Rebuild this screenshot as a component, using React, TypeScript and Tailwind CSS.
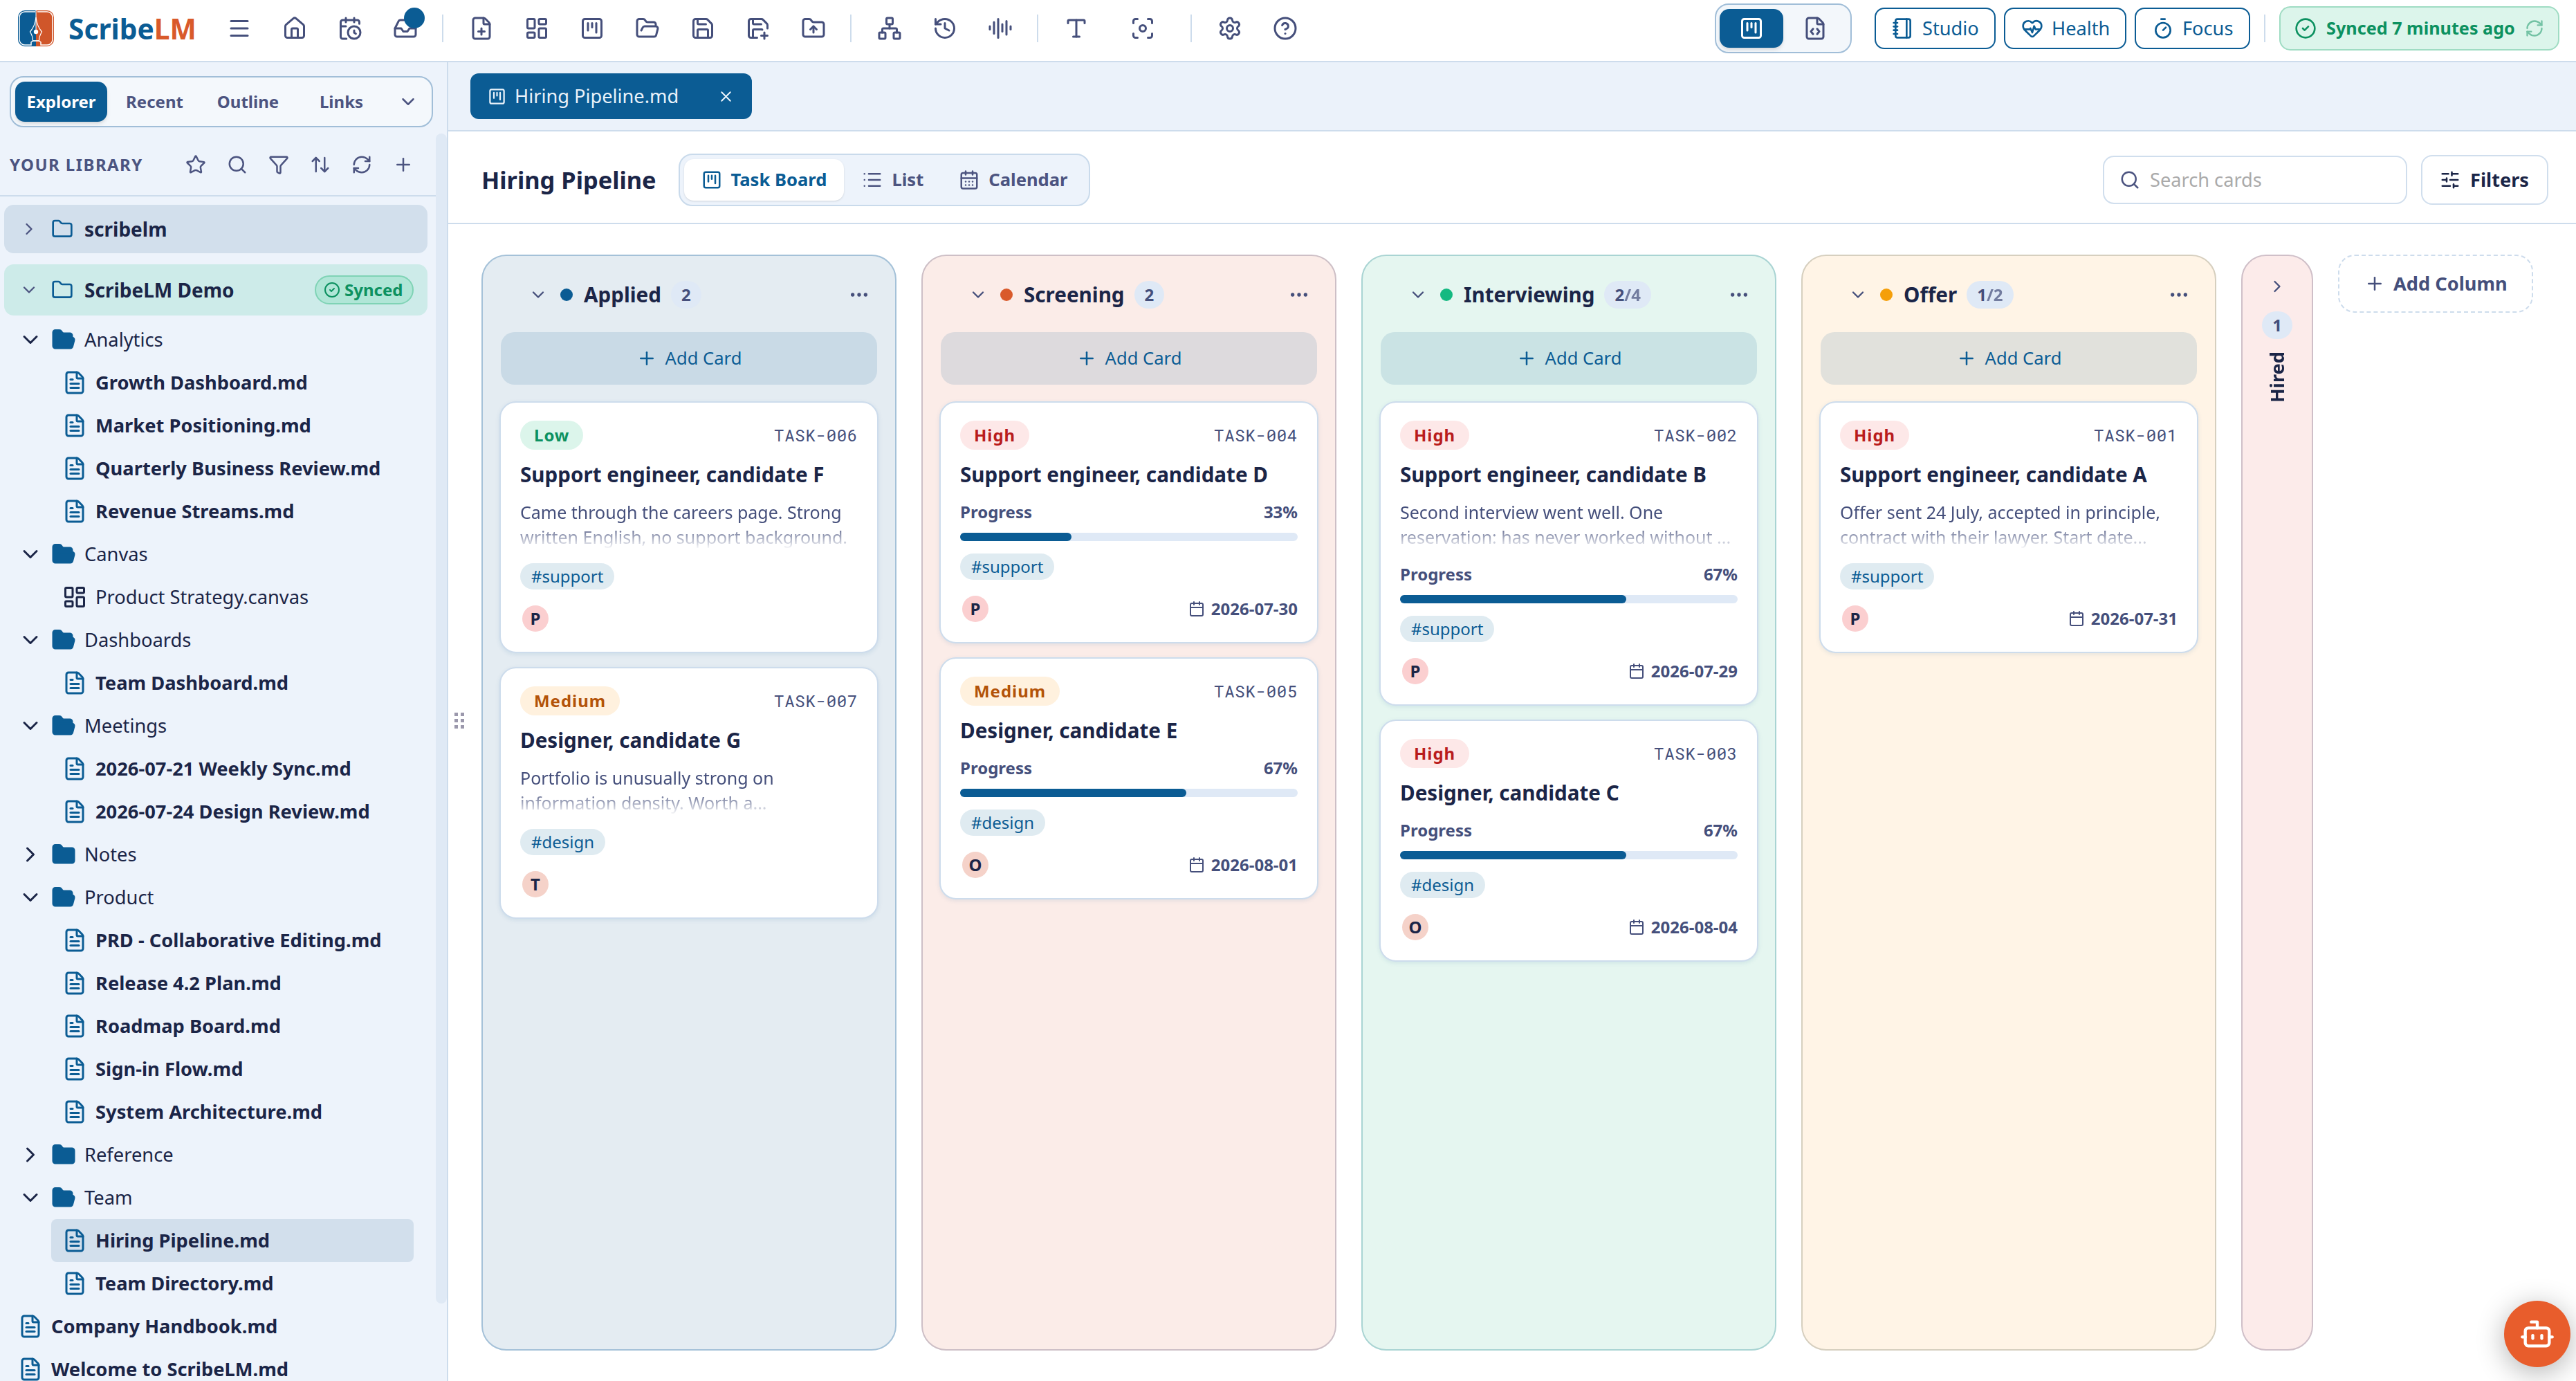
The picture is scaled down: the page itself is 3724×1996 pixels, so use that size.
import { ReactNode } from "react";
import clsx from "clsx";
import {
  ArrowUpDown,
  AudioLines,
  Bot,
  Calendar,
  CalendarClock,
  CalendarDays,
  ChevronDown,
  ChevronRight,
  CircleCheck,
  CircleQuestionMark,
  Ellipsis,
  FileCode,
  FilePlus,
  FileText,
  Focus,
  Folder,
  FolderOpen,
  FolderUp,
  Funnel,
  HeartPulse,
  History,
  House,
  Inbox,
  LayoutDashboard,
  List,
  LucideIcon,
  Menu,
  Network,
  Notebook,
  Plus,
  RefreshCw,
  Save,
  Search,
  Settings,
  SlidersHorizontal,
  SquareKanban,
  Star,
  Timer,
  Type,
  X,
} from "lucide-react";

type Priority = "Low" | "Medium" | "High";

interface Task {
  id: string;
  priority: Priority;
  title: string;
  lines?: string[];
  progress?: number;
  tag: string;
  owner: string;
  due?: string;
}

interface Column {
  name: string;
  count: string;
  limit?: string;
  dot: string;
  tone: string;
  tasks: Task[];
}

const columns: Column[] = [
  {
    name: "Applied",
    count: "2",
    dot: "bg-[#0b5c94]",
    tone: "bg-[#e4ecf2] border-[#a4c1d8]",
    tasks: [
      {
        id: "TASK-006",
        priority: "Low",
        title: "Support engineer, candidate F",
        lines: ["Came through the careers page. Strong", "written English, no support background."],
        tag: "#support",
        owner: "P",
      },
      {
        id: "TASK-007",
        priority: "Medium",
        title: "Designer, candidate G",
        lines: ["Portfolio is unusually strong on", "information density. Worth a..."],
        tag: "#design",
        owner: "T",
      },
    ],
  },
  {
    name: "Screening",
    count: "2",
    dot: "bg-[#d95a2b]",
    tone: "bg-[#fbece8] border-[#cdbfc6]",
    tasks: [
      {
        id: "TASK-004",
        priority: "High",
        title: "Support engineer, candidate D",
        progress: 33,
        tag: "#support",
        owner: "P",
        due: "2026-07-30",
      },
      {
        id: "TASK-005",
        priority: "Medium",
        title: "Designer, candidate E",
        progress: 67,
        tag: "#design",
        owner: "O",
        due: "2026-08-01",
      },
    ],
  },
  {
    name: "Interviewing",
    count: "2",
    limit: "/4",
    dot: "bg-[#14b981]",
    tone: "bg-[#e5f6f0] border-[#a9d4d3]",
    tasks: [
      {
        id: "TASK-002",
        priority: "High",
        title: "Support engineer, candidate B",
        lines: ["Second interview went well. One", "reservation: has never worked without ..."],
        progress: 67,
        tag: "#support",
        owner: "P",
        due: "2026-07-29",
      },
      {
        id: "TASK-003",
        priority: "High",
        title: "Designer, candidate C",
        progress: 67,
        tag: "#design",
        owner: "O",
        due: "2026-08-04",
      },
    ],
  },
  {
    name: "Offer",
    count: "1",
    limit: "/2",
    dot: "bg-[#f59f0a]",
    tone: "bg-[#fff4e6] border-[#d6cfbf]",
    tasks: [
      {
        id: "TASK-001",
        priority: "High",
        title: "Support engineer, candidate A",
        lines: ["Offer sent 24 July, accepted in principle,", "contract with their lawyer. Start date..."],
        tag: "#support",
        owner: "P",
        due: "2026-07-31",
      },
    ],
  },
];

const priorityTone: Record<Priority, string> = {
  Low: "bg-[#dcf5eb] text-[#0c9160]",
  Medium: "bg-[#fff1de] text-[#b35309]",
  High: "bg-[#fde8e8] text-[#b91c1c]",
};

const tree: { kind: "open" | "closed" | "file" | "canvas" | "root"; name: string }[] = [
  { kind: "open", name: "Analytics" },
  { kind: "file", name: "Growth Dashboard.md" },
  { kind: "file", name: "Market Positioning.md" },
  { kind: "file", name: "Quarterly Business Review.md" },
  { kind: "file", name: "Revenue Streams.md" },
  { kind: "open", name: "Canvas" },
  { kind: "canvas", name: "Product Strategy.canvas" },
  { kind: "open", name: "Dashboards" },
  { kind: "file", name: "Team Dashboard.md" },
  { kind: "open", name: "Meetings" },
  { kind: "file", name: "2026-07-21 Weekly Sync.md" },
  { kind: "file", name: "2026-07-24 Design Review.md" },
  { kind: "closed", name: "Notes" },
  { kind: "open", name: "Product" },
  { kind: "file", name: "PRD - Collaborative Editing.md" },
  { kind: "file", name: "Release 4.2 Plan.md" },
  { kind: "file", name: "Roadmap Board.md" },
  { kind: "file", name: "Sign-in Flow.md" },
  { kind: "file", name: "System Architecture.md" },
  { kind: "closed", name: "Reference" },
  { kind: "open", name: "Team" },
  { kind: "file", name: "Hiring Pipeline.md" },
  { kind: "file", name: "Team Directory.md" },
  { kind: "root", name: "Company Handbook.md" },
  { kind: "root", name: "Welcome to ScribeLM.md" },
];

function Logo() {
  return (
    <svg width="52" height="52" viewBox="0 0 52 52" fill="none">
      <path d="M26 0H10A10 10 0 0 0 0 10V42A10 10 0 0 0 10 52H26Z" fill="#0b5c94" />
      <path d="M26 0H42A10 10 0 0 1 52 10V42A10 10 0 0 1 42 52H26Z" fill="#d0562a" />
      <path
        d="M25 2H10A8 8 0 0 0 2 10V42A8 8 0 0 0 10 50H19V46L21.500 44H30.500L33 46V50H42A8 8 0 0 0 50 42V10A8 8 0 0 0 42 2H28"
        stroke="#fff"
        strokeWidth="1.500"
      />
      <path d="M26 10C25 19 21 27 17.500 31C20 35 21.500 39 21.500 44H30.500C30.500 39 32 35 34.500 31C31 27 27 19 26 10Z" stroke="#fff" strokeWidth="1.200" />
      <path d="M26 0V30" stroke="#fff" strokeWidth="1" />
      <circle cx="26" cy="31" r="3.200" fill="#fff" />
    </svg>
  );
}

// floppy disk with a plus in the lower right corner
function SavePlus() {
  return (
    <svg width="36" height="36" viewBox="0 0 24 24" fill="none" stroke="currentColor" strokeWidth="2" strokeLinecap="round" strokeLinejoin="round">
      <path d="M11 21H5a2 2 0 0 1-2-2V5a2 2 0 0 1 2-2h10.200a2 2 0 0 1 1.400.600l3.800 3.800a2 2 0 0 1 .600 1.400V12" />
      <path d="M16 13.300A1 1 0 0 0 15.500 13H8a1 1 0 0 0-1 1v7" />
      <path d="M7 3v4a1 1 0 0 0 1 1h7" />
      <path d="M15 19h6" />
      <path d="M18 16v6" />
    </svg>
  );
}

function ToolButton({ icon: Icon }: { icon: LucideIcon }) {
  return (
    <button className="flex h-14 w-20 items-center justify-center">
      <Icon size={36} />
    </button>
  );
}

function Divider({ className }: { className?: string }) {
  return <span className={clsx("h-10 w-0.5 bg-[#cddcec]", className ?? "mr-[15px] ml-[13px]")} />;
}

function OutlineButton({ icon: Icon, label, className }: { icon: LucideIcon; label: string; className: string }) {
  return (
    <button
      className={clsx(
        "flex h-[60px] items-center gap-3 rounded-[14px] border-2 border-[#0b5c94] pl-[23px] text-[27.2px] text-[#0b5c94]",
        className,
      )}
    >
      <Icon size={32} />
      {label}
    </button>
  );
}

function TopBar() {
  return (
    <header className="flex h-[90px] shrink-0 items-center border-b-2 border-[#cddcec] bg-white pr-6 pb-[6px] pl-[26px] text-[#454f7b]">
      <Logo />
      <div className="ml-[21px] w-[207px] text-[40.7px] leading-none font-bold text-[#0b5c94]">
        Scribe<span className="text-[#d95a2b]">LM</span>
      </div>

      <ToolButton icon={Menu} />
      <ToolButton icon={House} />
      <ToolButton icon={CalendarClock} />
      <div className="relative">
        <ToolButton icon={Inbox} />
        <span className="absolute -top-0.5 left-[38px] size-[30px] rounded-full bg-[#0b5c94]" />
      </div>
      <Divider />
      <ToolButton icon={FilePlus} />
      <ToolButton icon={LayoutDashboard} />
      <ToolButton icon={SquareKanban} />
      <ToolButton icon={FolderOpen} />
      <ToolButton icon={Save} />
      <button className="flex h-14 w-20 items-center justify-center">
        <SavePlus />
      </button>
      <ToolButton icon={FolderUp} />
      <Divider />
      <ToolButton icon={Network} />
      <ToolButton icon={History} />
      <ToolButton icon={AudioLines} />
      <Divider />
      <ToolButton icon={Type} />
      <span className="w-4" />
      <ToolButton icon={Focus} />
      <Divider className="mr-[15px] ml-[29px]" />
      <ToolButton icon={Settings} />
      <ToolButton icon={CircleQuestionMark} />

      <div className="ml-auto flex items-center">
        <div className="flex h-[72px] w-[198px] items-center rounded-[20px] border-2 border-[#a1bed8] bg-[#f3f7fb] px-[5px]">
          <button className="flex h-14 w-[92px] items-center justify-center rounded-[14px] bg-[#0b5c94] text-white shadow-md">
            <SquareKanban size={36} />
          </button>
          <button className="flex h-14 w-[92px] items-center justify-center">
            <FileCode size={36} />
          </button>
        </div>
        <div className="ml-[33px] flex gap-3">
          <OutlineButton icon={Notebook} label="Studio" className="w-[175px]" />
          <OutlineButton icon={HeartPulse} label="Health" className="w-[177px]" />
          <OutlineButton icon={Timer} label="Focus" className="w-[167px]" />
        </div>
        <Divider className="mx-5" />
        <div className="flex h-16 w-[405px] items-center rounded-[16px] border-2 border-[#9fdcc3] bg-[#dcf5eb] pl-5 text-[25.2px] font-bold text-[#0c9160]">
          <CircleCheck size={32} />
          <span className="ml-3.5">Synced 7 minutes ago</span>
          <RefreshCw size={28} className="ml-[14px] opacity-50" />
        </div>
      </div>
    </header>
  );
}

function TreeRow({ kind, name }: { kind: string; name: string }) {
  if (kind === "open" || kind === "closed") {
    const Chevron = kind === "open" ? ChevronDown : ChevronRight;
    const Icon = kind === "open" ? FolderOpen : Folder;
    return (
      <div className="flex h-[62px] shrink-0 items-center gap-3 pl-[26px]">
        <Chevron size={36} />
        <Icon size={36} className="fill-[#0b5c94] text-[#0b5c94]" />
        <span>{name}</span>
      </div>
    );
  }
  if (kind === "root") {
    return (
      <div className="flex h-[62px] shrink-0 items-center gap-3 pl-[26px] font-bold">
        <FileText size={36} className="text-[#0b5c94]" />
        {name}
      </div>
    );
  }
  return (
    <div
      className={clsx(
        "mr-8 ml-[74px] flex h-[62px] shrink-0 items-center gap-3 rounded-[8px] pl-4",
        name === "Hiring Pipeline.md" && "bg-[#d2dfec]",
        kind === "file" && "font-bold",
      )}
    >
      {kind === "file" ? <FileText size={36} className="text-[#0b5c94]" /> : <LayoutDashboard size={36} />}
      {name}
    </div>
  );
}

function Sidebar() {
  return (
    <aside className="flex w-[648px] shrink-0 flex-col overflow-hidden border-r-2 border-[#cddcec] bg-[#edf3fb] pt-5">
      <div className="ml-3.5 flex h-[74px] w-[612px] shrink-0 items-center gap-0.5 rounded-[20px] border-2 border-[#a1bed8] bg-[#f4f8fc] px-1.5 text-[24px] font-bold text-[#4c5480]">
        <button className="h-[58px] w-[133px] rounded-[14px] bg-[#0b5c94] text-white shadow-md">Explorer</button>
        <button className="h-[58px] w-[133px]">Recent</button>
        <button className="h-[58px] w-[133px]">Outline</button>
        <button className="h-[58px] w-[133px]">Links</button>
        <button className="flex h-[58px] w-14 items-center justify-center">
          <ChevronDown size={30} />
        </button>
      </div>

      <div className="mt-[9px] flex min-h-0 flex-1">
        <div className="flex w-[630px] shrink-0 flex-col overflow-hidden text-[27.3px] text-[#1b2547]">
          <div className="flex h-[91px] shrink-0 items-center border-b-2 border-[#cddcec] pl-3.5 text-[#4c5480]">
            <h2 className="w-[239px] text-[24px] font-bold tracking-[1.44px]">YOUR LIBRARY</h2>
            {[Star, Search, Funnel, ArrowUpDown, RefreshCw, Plus].map((Icon, i) => (
              <button key={i} className="flex w-[60px] justify-center">
                <Icon size={30} />
              </button>
            ))}
          </div>

          <div className="mt-3 ml-1.5 flex h-[70px] w-[612px] shrink-0 items-center rounded-[14px] bg-[#d2dfec] pl-[22px] text-[28px] font-bold">
            <ChevronRight size={28} className="text-[#4c5480]" />
            <Folder size={32} className="mr-4 ml-[18px] text-[#0b5c94]" />
            scribelm
          </div>
          <div className="mt-4 mb-1 ml-1.5 flex h-[74px] w-[612px] shrink-0 items-center rounded-[14px] bg-[#cdebe9] pl-[22px] text-[28px] font-bold">
            <ChevronDown size={28} className="text-[#4c5480]" />
            <Folder size={32} className="mr-4 ml-[18px] text-[#0b5c94]" />
            ScribeLM Demo
            <span className="mr-5 ml-auto flex h-[42px] w-[143px] items-center gap-1.5 rounded-full border-2 border-[#7fd3b5] bg-[#b0e6d7] pl-[11px] text-[24px] text-[#0c9160]">
              <CircleCheck size={24} />
              Synced
            </span>
          </div>

          {tree.map((row) => (
            <TreeRow key={row.name} kind={row.kind} name={row.name} />
          ))}
        </div>
        <div className="h-[1691px] w-4 rounded-[8px] bg-[#dfe9f5]" />
      </div>
    </aside>
  );
}

function ViewButton({ icon: Icon, label, active }: { icon: LucideIcon; label: string; active?: boolean }) {
  return (
    <button
      className={clsx(
        "flex h-[60px] items-center gap-[13px] rounded-[14px] px-[24.5px]",
        active ? "bg-white text-[#0b5c94] shadow-sm" : "text-[#4c5480]",
      )}
    >
      <Icon size={30} />
      {label}
    </button>
  );
}

function Toolbar() {
  return (
    <div className="flex h-[134px] shrink-0 items-center border-b-2 border-[#cddcec] pt-2 pr-10 pl-12">
      <h1 className="w-[285px] text-[34.4px] font-bold whitespace-nowrap text-[#1b2547]">Hiring Pipeline</h1>
      <div className="flex h-[76px] items-center gap-0.5 rounded-[20px] border-2 border-[#c9daeb] bg-[#edf3fb] px-1.5 text-[25.6px] font-bold">
        <ViewButton icon={SquareKanban} label="Task Board" active />
        <ViewButton icon={List} label="List" />
        <ViewButton icon={CalendarDays} label="Calendar" />
      </div>
      <div className="ml-auto flex h-[70px] w-[440px] items-center gap-[14px] rounded-[16px] border-2 border-[#d0deed] pl-[22px] text-[27.2px] text-[#aaaaaa]">
        <Search size={30} className="text-[#4c5480]" />
        Search cards
      </div>
      <button className="ml-5 flex h-[72px] w-[184px] items-center gap-[14px] rounded-[16px] border-2 border-[#d0deed] pl-[25px] text-[27.2px] font-bold text-[#1b2547]">
        <SlidersHorizontal size={30} />
        Filters
      </button>
    </div>
  );
}

function CountPill({ children }: { children: ReactNode }) {
  return (
    <span className="flex h-10 items-center rounded-full bg-[#dfe9f6] px-[15px] text-[24px] font-bold text-[#454f7b]">
      {children}
    </span>
  );
}

function TaskCard({ task }: { task: Task }) {
  return (
    <article className="flex flex-col gap-[18px] rounded-[24px] border-2 border-[#cddcec] bg-white px-7 py-[26px] text-[#454f7b] shadow-[0_2px_6px_rgba(11,92,148,0.1)]">
      <div className="flex h-[42px] items-center justify-between">
        <span className={clsx("flex h-[42px] items-center rounded-full px-5 text-[24px] font-bold tracking-[0.96px]", priorityTone[task.priority])}>
          {task.priority}
        </span>
        <span className="font-['Roboto_Mono','Noto_Sans_Mono',monospace] text-[24px] tracking-[0.72px]">{task.id}</span>
      </div>
      <h3 className="mb-0.5 text-[29.6px] leading-9 font-bold text-[#1b2547]">{task.title}</h3>
      {task.lines && (
        <p className="-mt-0.5 mb-0.5 text-[25px] leading-9 [mask-image:linear-gradient(to_bottom,black_50%,transparent_100%)]">
          {task.lines.map((line) => (
            <span key={line} className="block whitespace-nowrap">
              {line}
            </span>
          ))}
        </p>
      )}
      {task.progress && (
        <div className="flex flex-col gap-3.5">
          <div className="flex justify-between text-[24px] leading-8 font-bold">
            <span>Progress</span>
            <span>{task.progress}%</span>
          </div>
          <div className="h-3 rounded-full bg-[#dfe9f6]">
            <div className="h-3 rounded-full bg-[#0b5c94]" style={{ width: `${task.progress}%` }} />
          </div>
        </div>
      )}
      <div className="flex">
        <span className="flex h-[38px] items-center rounded-full bg-[#dfebf1] px-4 text-[24px] text-[#0b5c94]">{task.tag}</span>
      </div>
      <div className="mt-0.5 flex h-11 items-center justify-between">
        <span
          className={clsx(
            "ml-[3px] flex size-[38px] items-center justify-center rounded-full text-[24px] font-bold text-[#1b2547]",
            task.owner === "P" ? "bg-[#fbcfd0]" : "bg-[#f5d2c9]",
          )}
        >
          {task.owner}
        </span>
        {task.due && (
          <span className="flex items-center gap-[9px] text-[24px] font-bold">
            <Calendar size={24} />
            {task.due}
          </span>
        )}
      </div>
    </article>
  );
}

function BoardColumn({ column }: { column: Column }) {
  return (
    <section className={clsx("flex w-[600px] shrink-0 flex-col rounded-[36px] border-2 px-6 pt-5", column.tone)}>
      <div className="flex h-[72px] items-center gap-4 pr-3 pl-[42px]">
        <ChevronDown size={28} className="mr-0.5 text-[#454f7b]" />
        <span className={clsx("size-[18px] rounded-full", column.dot)} />
        <h2 className="-mr-0.5 text-[29.6px] font-bold text-[#1b2547]">{column.name}</h2>
        <CountPill>
          {column.count}
          <span className="opacity-70">{column.limit}</span>
        </CountPill>
        <Ellipsis size={32} className="ml-auto text-[#454f7b]" />
      </div>
      <button className="mx-0.5 mt-[18px] flex h-[76px] items-center justify-center gap-3 rounded-[20px] bg-[#0b5c94]/12 text-[25.6px] text-[#0b5c94]">
        <Plus size={30} />
        Add Card
      </button>
      <div className="mt-6 flex flex-col gap-5">
        {column.tasks.map((task) => (
          <TaskCard key={task.id} task={task} />
        ))}
      </div>
    </section>
  );
}

function Board() {
  return (
    <div className="flex min-h-0 flex-1 gap-9 py-11 pl-12">
      {columns.map((column) => (
        <BoardColumn key={column.name} column={column} />
      ))}
      <section className="flex w-[104px] shrink-0 flex-col items-center rounded-[36px] border-2 border-[#cfbfc8] bg-[#fcebea] pt-[30px]">
        <ChevronRight size={28} className="mb-[22px] text-[#454f7b]" />
        <CountPill>1</CountPill>
        <span className="mt-[18px] rotate-180 text-[27.2px] leading-[40px] font-bold text-[#1b2547] [writing-mode:vertical-rl]">Hired</span>
      </section>
      <button className="flex h-[84px] w-[282px] items-center gap-3 rounded-[24px] border-2 border-dashed border-[#cddcec] pl-[36px] text-[27.2px] font-bold text-[#454f7b]">
        <Plus size={30} />
        Add Column
      </button>
    </div>
  );
}

function App() {
  return (
    <div className="relative flex h-[1996px] w-[3724px] flex-col overflow-hidden bg-white font-['Noto_Sans',sans-serif]">
      <TopBar />
      <div className="flex min-h-0 flex-1">
        <Sidebar />
        <main className="relative flex min-w-0 flex-1 flex-col">
          {/* Open documents */}
          <div className="h-[100px] shrink-0 border-b-2 border-[#cddcec] bg-[#ebf2fa] pt-4 pl-8">
            <div className="flex h-[66px] w-[407px] items-center rounded-[12px] bg-[#0b5c94] pl-[25px] text-[27.2px] text-[#e9f2fa]">
              <SquareKanban size={27} />
              <span className="ml-[12px]">Hiring Pipeline.md</span>
              <X size={25} className="mr-[25px] ml-auto" />
            </div>
          </div>
          <Toolbar />
          <Board />

          {/* Sidebar resize handle */}
          <div className="absolute top-[940px] left-[9px] grid grid-cols-2 gap-x-1 gap-y-1">
            {[0, 1, 2, 3, 4, 5].map((dot) => (
              <span key={dot} className="size-[5px] bg-[#9b98ac]" />
            ))}
          </div>
        </main>
      </div>
      <button className="absolute right-2 bottom-5 flex size-24 items-center justify-center rounded-full bg-[#e85d2c] text-white shadow-[0_8px_40px_rgba(0,0,0,0.3)]">
        <Bot size={52} />
      </button>
    </div>
  );
}

export default App;
